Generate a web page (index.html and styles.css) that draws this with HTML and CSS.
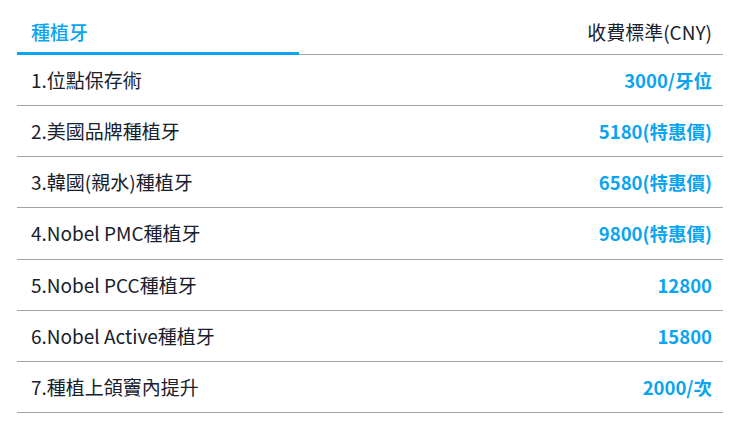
FILE: index.html
```html
<!DOCTYPE html>
<html lang="zh-Hant">
<head>
<meta charset="utf-8">
<title>種植牙</title>
<link rel="stylesheet" href="styles.css">
</head>
<body>
<div class="price-table">
  <div class="row head">
    <div class="cell tab">種植牙</div>
    <div class="cell price-head">收費標準(CNY)</div>
  </div>
  <div class="row">
    <div class="cell name">1.位點保存術</div>
    <div class="cell price">3000/牙位</div>
  </div>
  <div class="row">
    <div class="cell name">2.美國品牌種植牙</div>
    <div class="cell price">5180(特惠價)</div>
  </div>
  <div class="row">
    <div class="cell name">3.韓國(親水)種植牙</div>
    <div class="cell price">6580(特惠價)</div>
  </div>
  <div class="row">
    <div class="cell name">4.Nobel PMC種植牙</div>
    <div class="cell price">9800(特惠價)</div>
  </div>
  <div class="row">
    <div class="cell name">5.Nobel PCC種植牙</div>
    <div class="cell price">12800</div>
  </div>
  <div class="row">
    <div class="cell name">6.Nobel Active種植牙</div>
    <div class="cell price">15800</div>
  </div>
  <div class="row">
    <div class="cell name">7.種植上頜竇內提升</div>
    <div class="cell price">2000/次</div>
  </div>
</div>
</body>
</html>
```
FILE: styles.css
```css
html, body {
  margin: 0;
  padding: 0;
  background: #ffffff;
}
body {
  font-family: "Noto Sans CJK TC", "Noto Sans", sans-serif;
  font-size: 19px;
  font-weight: 400;
  color: #18212c;
}
.price-table {
  width: 706px;
  margin-left: 17px;
}
.row {
  display: grid;
  grid-template-columns: 40% 60%;
  border-bottom: 1px solid #a4a4a4;
}
.cell {
  line-height: 28px;
  padding: 11px 11px 11.17px 14px;
  white-space: nowrap;
}
.head .cell {
  padding-top: 18px;
  padding-bottom: 8px;
}
.head .tab {
  padding-bottom: 6px;
  border-bottom: 3px solid #0aa4ef;
  margin-bottom: -1px;
  color: #0aa4ef;
  font-weight: 500;
}
.price-head {
  text-align: right;
}
.price {
  text-align: right;
  color: #0aa4ef;
  font-weight: 700;
  font-size: 18.5px;
}
```
